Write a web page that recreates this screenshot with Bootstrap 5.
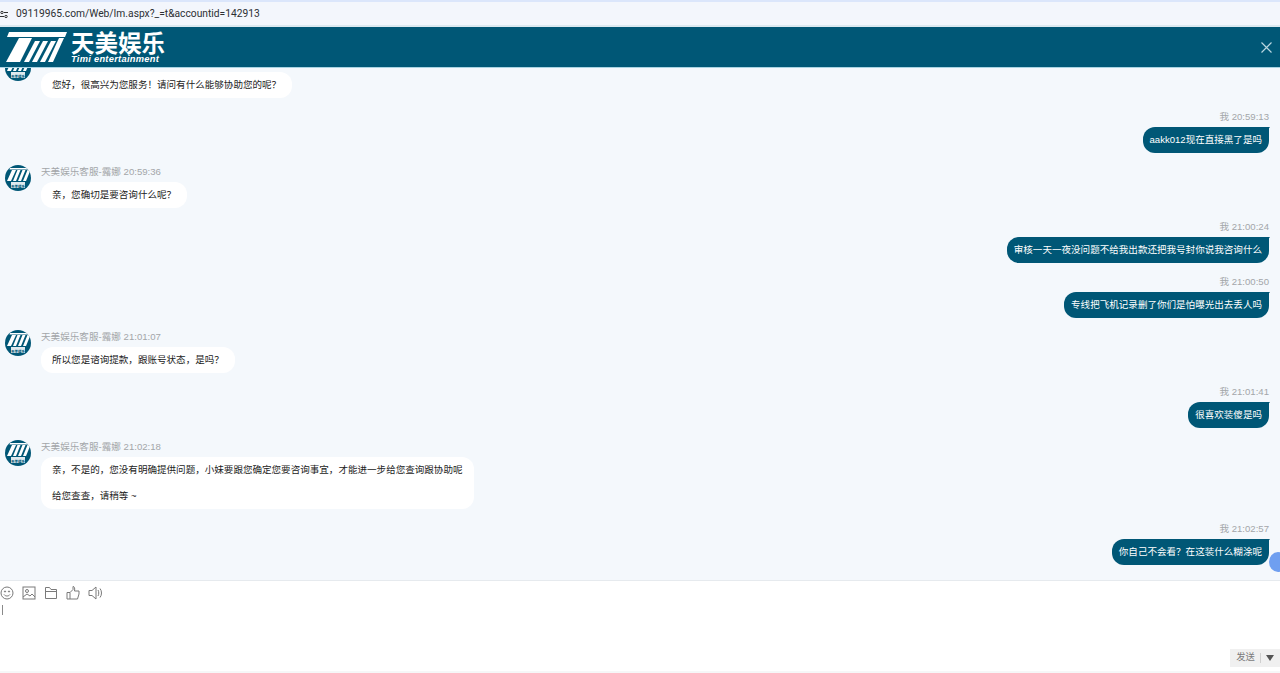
<!DOCTYPE html>
<html lang="zh">
<head>
<meta charset="utf-8">
<link href="https://cdn.jsdelivr.net/npm/bootstrap@5.3.0/dist/css/bootstrap.min.css" rel="stylesheet">
<style>
html,body{height:673px;overflow:hidden;}
body{font-family:"Liberation Sans","Noto Sans CJK SC",sans-serif;background:#fff;position:relative;}
.shell{height:673px;}
.urlbar{flex:none;height:25px;background:#f3f6fc;border-top:2px solid #dbe6fb;font-size:10.25px;color:#2b2f33;font-family:"Roboto","Noto Sans CJK SC",sans-serif;padding-left:16px;line-height:23px;position:relative;}
.siteicon{position:absolute;left:0;top:8px;}
.topbar{flex:none;height:43px;background:#005776;border-top:2px solid #dce9f0;border-bottom:1px solid #a8d3e2;color:#fff;padding-left:5px;}
.brandtxt{margin-left:4px;line-height:1;}
.brandcn{font-size:23.5px;font-weight:700;line-height:24px;font-family:"Noto Sans CJK SC",sans-serif;white-space:nowrap;}
.branden{font-size:9.3px;font-weight:700;font-style:italic;line-height:10px;letter-spacing:.28px;font-family:"Liberation Sans",sans-serif;white-space:nowrap;}
.closex{margin-right:8px;}
.chat{flex:1 1 auto;min-height:0;overflow:hidden;background:#f4f8fc;padding:0 11px 15px 5px;border-bottom:1px solid #e6eaee;justify-content:flex-end;position:relative;}
.msgrow{margin-top:12px;flex:none;}
.msgrow-last{margin-top:13px;}
.avatarwrap{width:26px;height:26px;flex:none;margin-right:10px;}
.who{font-size:9.6px;line-height:14px;color:#a3a6a9;margin-bottom:3px;white-space:nowrap;}
.bubble{font-size:9.55px;line-height:26px;padding:0 11px;border-radius:12px;white-space:nowrap;}
.bubble-in{background:#fff;color:#222;}
.bubble-out{background:#005776;color:#fff;padding:0 7px;border-radius:12px 0 12px 12px;position:relative;}
.bubble-out::after{content:"";position:absolute;right:-1px;top:0;border-top:5px solid #005776;border-right:4px solid transparent;}
.dot{position:absolute;right:-7px;bottom:8px;width:18px;height:20px;border-radius:50%;background:#6f9ff0;}
.composer{height:92px;flex:none;background:#fff;position:relative;border-bottom:2px solid #f6f7f8;}
.tools{height:24px;gap:8px;color:#7d7d7d;}
.caretline{width:1px;height:10px;background:#8a8a8a;margin:0 0 0 2px;}
.sendbox{position:absolute;right:0;bottom:4px;width:50px;height:18px;background:#f0f0f0;color:#7a7a7a;font-size:9.3px;}
.sep{width:1px;height:10px;background:#cfcfcf;margin:0 5px;}
.tri{width:0;height:0;border-left:4px solid transparent;border-right:4px solid transparent;border-top:6px solid #555;}
.defs{height:0;width:0;}
</style>
</head>
<body>
<div class="shell d-flex flex-column">
  <div class="urlbar">
    <svg class="siteicon" width="9" height="9" viewBox="0 0 9 9"><circle cx="2" cy="2.500" r="1.200" fill="none" stroke="#333"/><line x1="4" y1="2.500" x2="8" y2="2.500" stroke="#333"/><circle cx="6" cy="6.500" r="1.200" fill="none" stroke="#333"/><line x1="0" y1="6.500" x2="4" y2="6.500" stroke="#333"/></svg>
    09119965.com/Web/Im.aspx?_=t&amp;accountid=142913
  </div>
  <div class="topbar d-flex align-items-center">
    <svg width="62" height="32" viewBox="0 0 62 32" fill="#fff"><polygon points="4,1 62,1 60,6 34,6 30,6 2,6"/><polygon points="14,7 27,7 15,31 1,31"/><polygon points="30,10 35,10 24,31 19,31"/><polygon points="38,10 43,10 32,31 27,31"/><polygon points="46,10 51,10 40,31 35,31"/><polygon points="54,7 59,7 48,31 43,31"/></svg>
    <div class="brandtxt">
      <div class="brandcn">天美娱乐</div>
      <div class="branden">Timi entertainment</div>
    </div>
    <svg class="closex ms-auto" width="11" height="11" viewBox="0 0 11 11"><path d="M.5.5l10 10M10.500.5l-10 10" stroke="#b9d6e0" stroke-width="1.200"/></svg>
  </div>
  <div class="chat d-flex flex-column">
    <div class="msgrow d-flex"><div class="avatarwrap"><svg width="26" height="26"><use href="#ava"/></svg></div><div class="d-flex flex-column align-items-start"><div class="who">天美娱乐客服-露娜 20:59:00</div><div class="bubble bubble-in">您好，很高兴为您服务！请问有什么能够协助您的呢？</div></div></div>
    <div class="msgrow d-flex flex-column align-items-end"><div class="who">我 20:59:13</div><div class="bubble bubble-out">aakk012现在直接黑了是吗</div></div>
    <div class="msgrow d-flex"><div class="avatarwrap"><svg width="26" height="26"><use href="#ava"/></svg></div><div class="d-flex flex-column align-items-start"><div class="who">天美娱乐客服-露娜 20:59:36</div><div class="bubble bubble-in">亲，您确切是要咨询什么呢？</div></div></div>
    <div class="msgrow d-flex flex-column align-items-end"><div class="who">我 21:00:24</div><div class="bubble bubble-out">审核一天一夜没问题不给我出款还把我号封你说我咨询什么</div></div>
    <div class="msgrow d-flex flex-column align-items-end"><div class="who">我 21:00:50</div><div class="bubble bubble-out">专线把飞机记录删了你们是怕曝光出去丢人吗</div></div>
    <div class="msgrow d-flex"><div class="avatarwrap"><svg width="26" height="26"><use href="#ava"/></svg></div><div class="d-flex flex-column align-items-start"><div class="who">天美娱乐客服-露娜 21:01:07</div><div class="bubble bubble-in">所以您是谘询提款，跟账号状态，是吗？</div></div></div>
    <div class="msgrow d-flex flex-column align-items-end"><div class="who">我 21:01:41</div><div class="bubble bubble-out">很喜欢装傻是吗</div></div>
    <div class="msgrow d-flex"><div class="avatarwrap"><svg width="26" height="26"><use href="#ava"/></svg></div><div class="d-flex flex-column align-items-start"><div class="who">天美娱乐客服-露娜 21:02:18</div><div class="bubble bubble-in">亲，不是的，您没有明确提供问题，小妹要跟您确定您要咨询事宜，才能进一步给您查询跟协助呢<br>给您查查，请稍等 ~</div></div></div>
    <div class="msgrow msgrow-last d-flex flex-column align-items-end"><div class="who">我 21:02:57</div><div class="bubble bubble-out">你自己不会看？在这装什么糊涂呢</div></div>
    <div class="dot"></div>
  </div>
  <div class="composer">
    <div class="tools d-flex align-items-center">
      <svg width="14" height="14" viewBox="0 0 14 14" fill="none" stroke="#7a7a7a"><circle cx="7" cy="7" r="6"/><circle cx="5" cy="5.500" r=".6" fill="#7a7a7a"/><circle cx="9" cy="5.500" r=".6" fill="#7a7a7a"/><path d="M4 8.500c1.500 2 4.500 2 6 0"/></svg>
      <svg width="14" height="14" viewBox="0 0 14 14" fill="none" stroke="#7a7a7a"><rect x="1" y="1" width="12" height="12"/><circle cx="5" cy="5" r="1.500"/><path d="M1 11l4-3 3 2 2-2 3 3"/></svg>
      <svg width="14" height="14" viewBox="0 0 14 14" fill="none" stroke="#7a7a7a"><path d="M1.500 12.500v-11h4l1.500 2h5.500v9zM1.500 5.500h11"/></svg>
      <svg width="14" height="14" viewBox="0 0 14 14" fill="none" stroke="#7a7a7a"><path d="M1 6.500h3v6.500h-3zM4 6.500l3-3v-3c1.500 0 2 1.500 1.500 4.500h4.500v3l-1.500 5h-7.500"/></svg>
      <svg width="16" height="14" viewBox="0 0 16 14" fill="none" stroke="#7a7a7a"><path d="M1 4.500h3l4-3.500v12l-4-3.500h-3zM10 4c1 1.500 1 4.500 0 6M12 2.500c2 2.500 2 6.500 0 9"/></svg>
    </div>
    <div class="caretline"></div>
    <div class="sendbox d-flex align-items-center justify-content-center"><span>发送</span><span class="sep"></span><span class="tri"></span></div>
  </div>
</div>
<svg class="defs d-block"><defs>
<g id="ava"><clipPath id="cp"><circle cx="13" cy="13" r="13"/></clipPath><g clip-path="url(#cp)"><rect width="26" height="26" fill="#005776"/><polygon points="5,3 24,3 23.500,4.500 4.500,4.500" fill="#fff"/><polygon points="7,5 11,5 6,16 2,16" fill="#fff"/><polygon points="12.500,5 15.500,5 11,16 8,16" fill="#fff"/><polygon points="17.500,5 20.500,5 16,16 13,16" fill="#fff"/><polygon points="22.500,5 25.500,5 21,16 18,16" fill="#fff"/><rect y="17" x="6" width="14" height="6" fill="#dfe9ee"/><text x="13" y="22.500" text-anchor="middle" font-size="3.500" font-weight="700" fill="#005776" font-family="Noto Sans CJK SC">天美娱乐</text></g></g>
</defs></svg>
<script src="https://cdn.jsdelivr.net/npm/bootstrap@5.3.0/dist/js/bootstrap.bundle.min.js"></script>
</body>
</html>
